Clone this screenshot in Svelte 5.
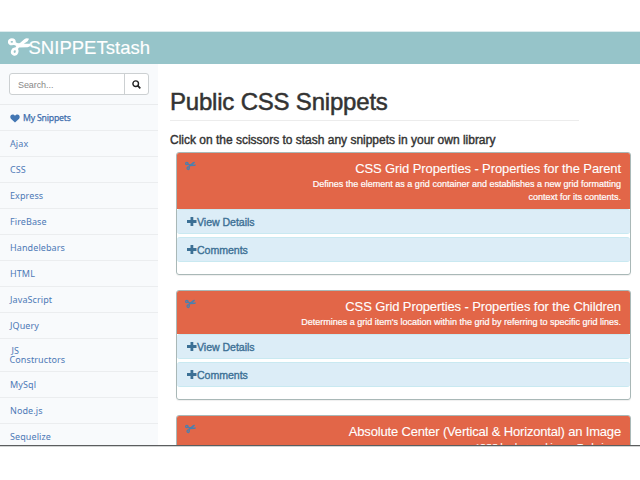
<script>
  const links = ['Ajax', 'CSS', 'Express', 'FireBase', 'Handelebars', 'HTML', 'JavaScript', 'JQuery', 'JS Constructors', 'MySql', 'Node.js', 'Sequelize'];
  const cards = [
    { title: 'CSS Grid Properties - Properties for the Parent', lines: ['Defines the element as a grid container and establishes a new grid formatting', 'context for its contents.'] },
    { title: 'CSS Grid Properties - Properties for the Children', lines: ["Determines a grid item's location within the grid by referring to specific grid lines."] },
    { title: 'Absolute Center (Vertical & Horizontal) an Image', lines: ['*CSS background-image Technique:'] }
  ];
</script>

{#snippet scissors(w, h)}
  <svg class="scissors" width={w} height={h} viewBox="0 0 24 20" fill="none" stroke="currentColor">
    <ellipse cx="4" cy="4.6" rx="2.7" ry="2.3" stroke-width="2.8" />
    <ellipse cx="7" cy="14.8" rx="2.5" ry="2.8" stroke-width="2.8" transform="rotate(20 7 14.8)" />
    <path d="M6 6L11 8.2L8.4 12.4" stroke-width="3.2" />
    <path d="M9.5 6.6L12.5 5.8L17 1.8Q19.5 0 22 1.4L20.5 4L16.5 6.6H24Q23.5 9.8 20.5 10.2L11 10.4Z" fill="currentColor" stroke="none" />
  </svg>
{/snippet}

<div class="page">
  <header>{@render scissors(23, 20)}<span>SNIPPETstash</span></header>
  <div class="body">
    <nav>
      <div class="searchrow">
        <div class="search">
          <span class="field">Search...</span>
          <span class="btn">
            <svg width="9" height="9" viewBox="0 0 9 9" fill="none" stroke="#222"><circle cx="3.7" cy="3.7" r="2.8" stroke-width="1.4" /><path d="M5.7 5.7L8.3 8.3" stroke-width="1.7" /></svg>
          </span>
        </div>
      </div>
      <a class="mine" href="#mine">
        <svg width="10" height="9" viewBox="0 0 10 9"><path d="M5 8.6L.9 4.7C-.4 3.1.5.6 2.6.6 3.8.6 4.6 1.2 5 2 5.4 1.2 6.2.6 7.4.6 9.5.6 10.4 3.1 9.1 4.7Z" fill="#4276b3" /></svg>
        <span>My Snippets</span>
      </a>
      {#each links as link}
        {#if link === 'JS Constructors'}
          <a class="tall" href="#js"><span class="js">JS</span><span>Constructors</span></a>
        {:else}
          <a href="#{link}">{link}</a>
        {/if}
      {/each}
    </nav>
    <main>
      <h1>Public CSS Snippets</h1>
      <h4>Click on the scissors to stash any snippets in your own library</h4>
      {#each cards as card}
        <section>
          <div class="head">
            {@render scissors(11, 10)}
            <div class="copy">
              <h3>{card.title}</h3>
              {#each card.lines as line}<p>{line}</p>{/each}
            </div>
          </div>
          {#each ['View Details', 'Comments'] as label}
            <div class="bar">
              <svg width="10" height="9" viewBox="0 0 10 9"><path d="M3.5 0H6.3V3.1H9.5V5.9H6.3V9H3.5V5.9H0V3.1H3.5Z" fill="#3c7095" /></svg>
              <span>{label}</span>
            </div>
          {/each}
        </section>
      {/each}
    </main>
  </div>
</div>

<style>
  :global(body) { background: #fff; overflow: hidden; }
  * { box-sizing: border-box; }
  .page { width: 640px; height: 447px; padding-top: 31px; overflow: hidden; display: flex; flex-direction: column; font-family: "Liberation Sans", Arial, sans-serif; white-space: nowrap; border-bottom: 1px solid #d2d4d4; }
  header { height: 33px; flex: none; border-top: 1px solid #dcebed; background: #96c4c9; color: #fff; display: flex; align-items: flex-start; padding: 5px 0 0 8px; font-size: 18.5px; line-height: 22px; }
  header span { margin-left: -2.5px; letter-spacing: .02px; -webkit-text-stroke: .15px #fff; }
  svg { display: block; flex: none; }
  .body { display: flex; height: 382px; flex: none; overflow: hidden; border-bottom: 1px solid #5b5d5e; }
  nav { width: 158px; flex: none; background: #f8fafc; font-family: "Noto Sans", sans-serif; }
  .searchrow { height: 41px; padding: 9px 9px 0; border-bottom: 1px solid #e9ebed; }
  .search { width: 140px; height: 22px; border: 1px solid #ccd0d2; border-radius: 3px; background: #fff; display: flex; font: 9px/22px "Liberation Sans", sans-serif; color: #888; }
  .field { flex: 1; padding-left: 8px; letter-spacing: -.08px; }
  .btn { width: 24px; border-left: 1px solid #ccd0d2; display: flex; align-items: center; justify-content: center; }
  nav a { display: flex; height: 26px; padding: 0 0 1px 10px; align-items: center; border-bottom: 1px solid #ebedef; font-size: 9px; line-height: 9px; color: #4d79b6; text-decoration: none; letter-spacing: .1px; }
  nav a.mine { padding: 2px 0 0 10px; gap: 3px; font-size: 8.7px; color: #3f6fae; -webkit-text-stroke: .25px #3f6fae; letter-spacing: -.2px; }
  nav a.tall { height: 33px; flex-direction: column; align-items: flex-start; justify-content: center; padding-left: 9.5px; }
  .js { padding-left: 2px; }
  main { flex: 1; padding: 24px 9px 0 12px; }
  h1, h4, h3, p { margin: 0; font-weight: 400; }
  h1 { width: 409px; height: 33px; border-bottom: 1px solid #ececec; font-size: 24px; line-height: 28px; letter-spacing: -.2px; color: #333; -webkit-text-stroke: .5px #333; }
  h4 { height: 31px; padding-top: 11px; font-size: 12px; line-height: 16px; letter-spacing: -.01px; color: #333; -webkit-text-stroke: .4px #333; }
  section { margin: 0 0 15px 6px; height: 123px; border: 1px solid #a9b8b7; border-radius: 3px; box-shadow: 0 1px 1px #0001; overflow: hidden; }
  section:nth-of-type(2), section:nth-of-type(3) { height: 110px; }
  .head { background: #e26648; color: #fff; display: flex; padding: 8px 9px 0 8px; height: 56px; }
  section:nth-of-type(2) .head, section:nth-of-type(3) .head { height: 43px; }
  .head :global(.scissors) { color: #4c7fae; }
  .copy { margin-left: auto; text-align: right; }
  h3 { font-size: 13px; line-height: 16px; letter-spacing: -.11px; -webkit-text-stroke: .1px #fff; }
  section:nth-of-type(3) h3 { letter-spacing: -.17px; }
  p { font-size: 9px; line-height: 13px; letter-spacing: 0; -webkit-text-stroke: .2px #fff; }
  h3 + p { padding-top: .5px; }
  .bar { height: 25px; margin-bottom: 3px; background: #dcedf7; border: 1px solid #c9e9f1; border-width: 1px 0; border-radius: 3px; display: flex; align-items: center; padding-left: 10px; font-size: 10.6px; letter-spacing: -.05px; color: #3c7095; -webkit-text-stroke: .35px #3c7095; }
</style>
